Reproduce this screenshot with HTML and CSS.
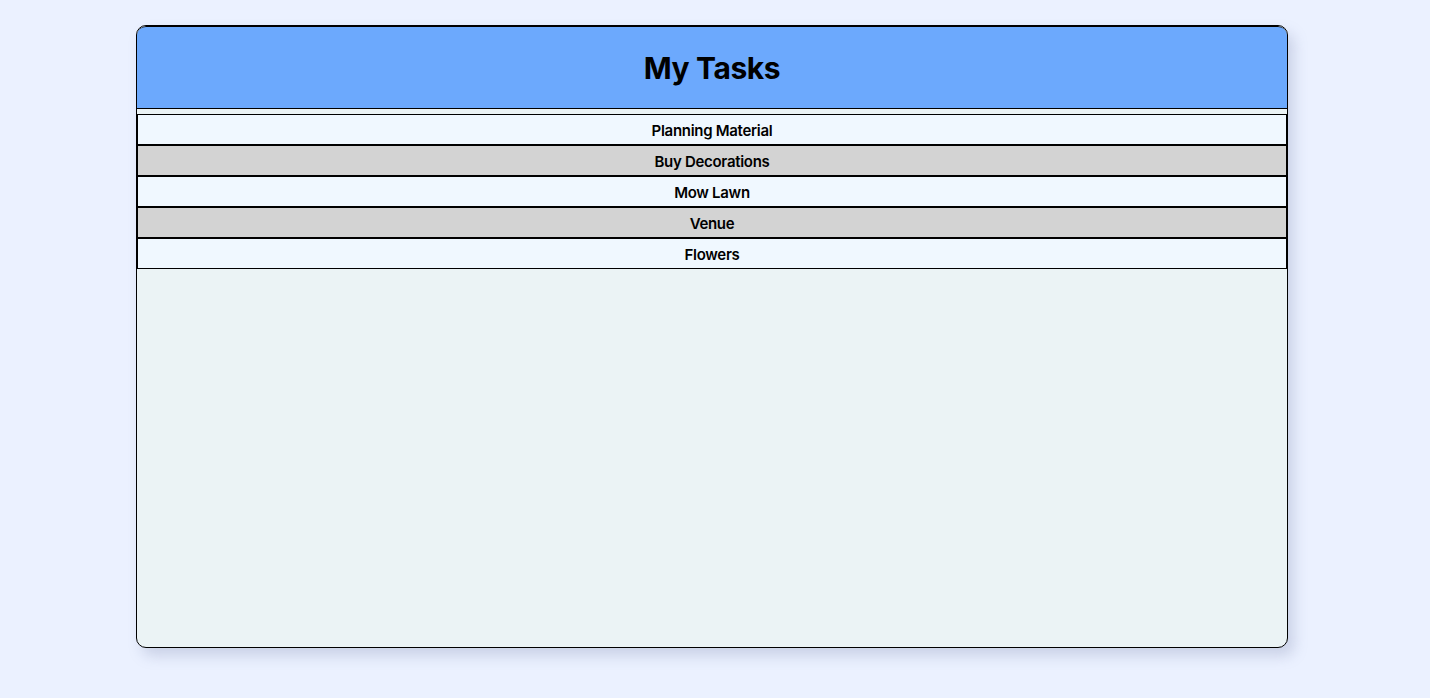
FILE: index.html
```html
<!DOCTYPE html>
<html>
<head>
<meta charset="utf-8">
<link rel="stylesheet" href="styles.css">
</head>
<body>
<div class="app">
  <header class="app-header">
    <h1 class="title">My Tasks</h1>
  </header>
  <ul class="task-list">
    <li class="task task-light">Planning Material</li>
    <li class="task task-grey">Buy Decorations</li>
    <li class="task task-light">Mow Lawn</li>
    <li class="task task-grey">Venue</li>
    <li class="task task-light">Flowers</li>
  </ul>
</div>
</body>
</html>
```
FILE: styles.css
```css
html, body {
  margin: 0;
  padding: 0;
}
body {
  background: #ebf1ff;
  font-family: Inter, "Liberation Sans", sans-serif;
  height: 698px;
  overflow: hidden;
}
.app {
  margin: 25px 0 0 136px;
  width: 1150px;
  height: 621px;
  border: 1px solid #000;
  border-radius: 10px;
  background: #ebf3f5;
  box-shadow: 6px 8px 14px rgba(120, 130, 170, 0.28);
  overflow: hidden;
}
.app-header {
  background: #6ca9fd;
  border-top: 1px solid #000;
  border-bottom: 1px solid #000;
  height: 80px;
  padding-top: 1px;
  display: flex;
  align-items: center;
  justify-content: center;
  border-radius: 9px 9px 0 0;
}
.title {
  margin: 0;
  font-size: 30px;
  font-weight: 700;
  color: #000;
  letter-spacing: -0.4px;
}
.task-list {
  list-style: none;
  margin: 5px 0 0 0;
  padding: 0;
}
.task {
  height: 28px;
  padding-top: 1px;
  border: 1px solid #000;
  display: flex;
  align-items: center;
  justify-content: center;
  font-size: 15px;
  font-weight: 600;
  color: #000;
  letter-spacing: -0.3px;
}
.task-light {
  background: #f0f8ff;
}
.task-grey {
  background: #d3d3d3;
}
```
